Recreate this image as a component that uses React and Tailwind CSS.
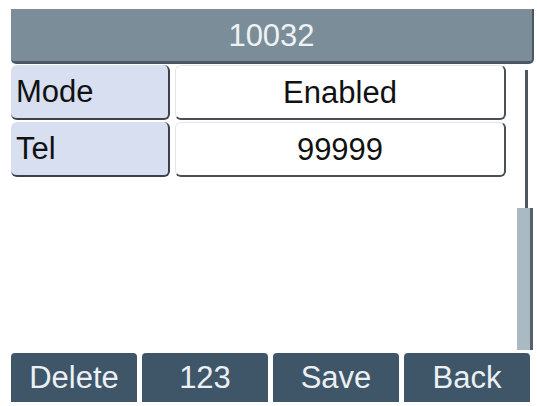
import React from 'react';

const rows = [
  { label: 'Mode', value: 'Enabled' },
  { label: 'Tel', value: '99999' },
];

const softkeys = ['Delete', '123', 'Save', 'Back'];

const App = () => {
  return (
    <div className="w-[537px] h-[406px] bg-white flex flex-col font-['Liberation_Sans',Arial,sans-serif] overflow-hidden">
      <div className="mt-[9px] ml-[11px] mr-[3px] h-[55px] bg-[#7b8d99] border-b-[3px] border-r-2 border-[#4b5763] rounded-b-[5px] flex items-center justify-center text-[31px] text-[#eef2f5] leading-none">
        10032
      </div>
      <div className="flex h-[289px]">
        <div className="flex-1 pl-[11px] pt-px flex flex-col gap-[2px]">
          {rows.map((row) => (
            <div key={row.label} className="flex h-[55px] gap-[5px]">
              <div className="w-[159px] bg-[#d7dff0] border-r-2 border-b-2 border-[#3b424a] rounded-md flex items-center pl-[5px] text-[31px] text-[#111] leading-none">
                {row.label}
              </div>
              <div className="w-[331px] bg-white border-l border-t border-[#e3e6ea] border-r-2 border-b-2 border-r-[#4a4f55] border-b-[#4a4f55] rounded-md flex items-center justify-center text-[31px] text-[#111] leading-none">
                {row.value}
              </div>
            </div>
          ))}
        </div>
        <div className="w-[16px] mr-[4px] mt-[6px] mb-[3px] flex flex-col">
          <div className="flex-1 flex justify-end pr-[5px]">
            <div className="w-[3px] h-full bg-[#4f565d]" />
          </div>
          <div className="h-[142px] bg-[#a9bac3] border-r-[3px] border-[#566068]" />
        </div>
      </div>
      <div className="flex gap-[5px] ml-[11px] mr-[7px] h-[49px]">
        {softkeys.map((k) => (
          <div
            key={k}
            className="flex-1 bg-[#3f5669] rounded-t-[4px] flex items-center justify-center text-[31px] text-[#eaf0f4] leading-none"
          >
            {k}
          </div>
        ))}
      </div>
    </div>
  );
};

export default App;
